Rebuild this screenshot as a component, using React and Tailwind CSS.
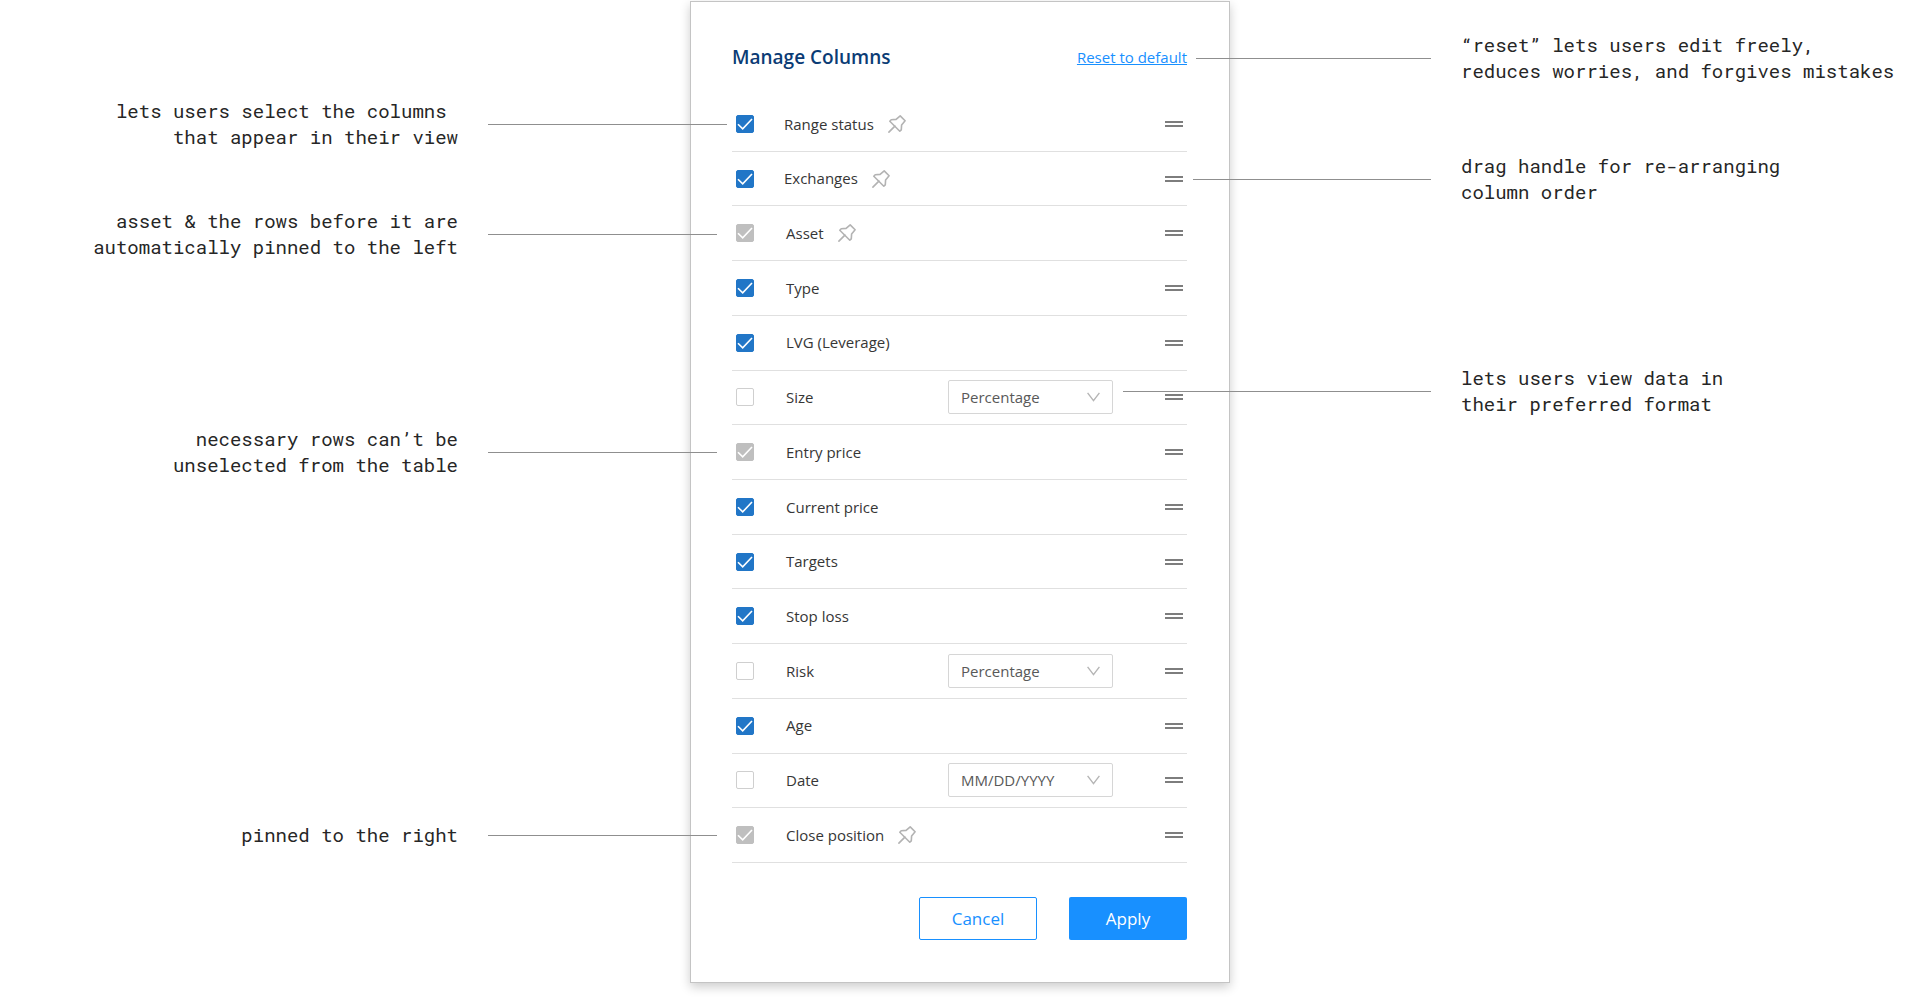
const columns = [
  { id: 'range', label: 'Range status', checked: true, pinned: true, inset: 'pl-[30px]' },
  { id: 'exchanges', label: 'Exchanges', checked: true, pinned: true, inset: 'pl-[30px]' },
  { id: 'asset', label: 'Asset', checked: true, locked: true, pinned: true },
  { id: 'type', label: 'Type', checked: true },
  { id: 'lvg', label: 'LVG (Leverage)', checked: true },
  { id: 'size', label: 'Size', format: ['Percentage', 'Amount'] },
  { id: 'entry', label: 'Entry price', checked: true, locked: true },
  { id: 'current', label: 'Current price', checked: true },
  { id: 'targets', label: 'Targets', checked: true },
  { id: 'stop', label: 'Stop loss', checked: true },
  { id: 'risk', label: 'Risk', format: ['Percentage', 'Amount'] },
  { id: 'age', label: 'Age', checked: true },
  { id: 'date', label: 'Date', format: ['MM/DD/YYYY', 'DD/MM/YYYY'] },
  { id: 'close', label: 'Close position', checked: true, locked: true, pinned: true },
];

const leftNotes = [
  { lines: ['lets users select the columns ', 'that appear in their view'], place: 'mt-[98px]', line: 'w-[239px] -mr-[37px]' },
  { lines: ['asset & the rows before it are', 'automatically pinned to the left'], place: 'mt-[58px]', line: 'w-[229px] -mr-[27px]' },
  { lines: ['necessary rows can’t be', 'unselected from the table'], place: 'mt-[166px]', line: 'w-[229px] -mr-[27px]' },
  { lines: ['pinned to the right'], place: 'mt-[344px]', line: 'w-[229px] -mr-[27px]' },
];

const rightNotes = [
  { lines: ['“reset” lets users edit freely,', 'reduces worries, and forgives mistakes'], place: 'mt-8', line: 'w-[235px] -ml-[34px]' },
  { lines: ['drag handle for re-arranging', 'column order'], place: 'mt-[69px]', line: 'w-[238px] -ml-[37px]' },
  { lines: ['lets users view data in', 'their preferred format'], place: 'mt-40', line: 'w-[308px] -ml-[107px]' },
];

function PinIcon() {
  return (
    <svg className="h-[18px] w-[18px] shrink-0" viewBox="0 0 18 18" fill="none" stroke="#b3b3b3" strokeWidth="1.6" strokeLinejoin="round" strokeLinecap="round" aria-hidden="true">
      <path d="M12.2 0.9 L17.1 5.8 L13.6 9.9 L13.3 14.8 L11.8 16.2 L1.8 6.2 L3.2 4.7 L8.1 4.4 Z" />
      <path d="M6.9 11.1 L0.9 17.1" />
    </svg>
  );
}

function Checkbox({ id, checked, locked }) {
  return (
    <span className="grid h-[18px] w-[18px] shrink-0">
      <input
        id={id}
        type="checkbox"
        defaultChecked={checked}
        disabled={locked}
        className="peer col-start-1 row-start-1 h-[18px] w-[18px] appearance-none rounded-xs border border-[#cfcfcf] bg-white checked:border-[#2176c7] checked:bg-[#2176c7] disabled:border-[#bfbfbf] disabled:bg-[#bfbfbf]"
      />
      <svg className="pointer-events-none invisible col-start-1 row-start-1 h-[18px] w-[18px] peer-checked:visible" viewBox="0 0 18 18" fill="none" stroke="#fff" strokeWidth="1.6" aria-hidden="true">
        <path d="M2 9.2 L6.7 13.9 L16 4" />
      </svg>
    </span>
  );
}

function FormatSelect({ label, options }) {
  return (
    <span className="ml-auto mr-[52px] grid w-[165px] items-center">
      <select
        aria-label={label + ' format'}
        className="col-start-1 row-start-1 h-[34px] w-full appearance-none rounded-xs border border-[#d6d6d6] bg-white pl-3 pr-8 text-[15px] text-[#595959]"
      >
        {options.map((o) => (
          <option key={o}>{o}</option>
        ))}
      </select>
      <svg className="pointer-events-none col-start-1 row-start-1 mr-[13px] h-[10px] w-[13px] justify-self-end" viewBox="0 0 13 10" fill="none" stroke="#b5b5b5" strokeWidth="1.4" aria-hidden="true">
        <path d="M0.6 0.8 L6.5 8.6 L12.4 0.8" />
      </svg>
    </span>
  );
}

function Row({ id, label, checked, locked, pinned, format, inset = 'pl-8' }) {
  return (
    <li className="flex items-center border-b border-[#e0e0e0] pl-1 pr-1">
      <Checkbox id={id} checked={checked} locked={locked} />
      <label htmlFor={id} className={inset + ' text-[15px] text-[#363636]'}>
        {label}
      </label>
      {pinned && (
        <span className="pl-[14px]">
          <PinIcon />
        </span>
      )}
      {format && <FormatSelect label={label} options={format} />}
      <button type="button" aria-label={'Move ' + label} className={(format ? '' : 'ml-auto ') + 'flex h-[6px] w-[18px] cursor-grab flex-col justify-between'}>
        <span className="h-[2px] w-full bg-[#7d7d7d]" />
        <span className="h-[2px] w-full bg-[#7d7d7d]" />
      </button>
    </li>
  );
}

function Note({ lines, place, line, side }) {
  const connector = <span className={'relative z-10 h-px shrink-0 bg-[#8f8f8f] ' + line} />;
  return (
    <div className={'flex items-center gap-[30px] ' + place + (side === 'left' ? ' justify-end text-right' : '')}>
      {side === 'right' && connector}
      <p className="whitespace-pre">
        {lines.map((t) => (
          <span key={t} className="block">
            {t}
          </span>
        ))}
      </p>
      {side === 'left' && connector}
    </div>
  );
}

export default function App() {
  const noteStyle = "font-['Roboto_Mono','DejaVu_Sans_Mono',monospace] text-[19px] leading-[26px] text-[#262626]";
  return (
    <main className="grid min-h-screen grid-cols-[minmax(0,1fr)_540px_minmax(0,1fr)] items-start bg-white">
      <aside className={noteStyle}>
        {leftNotes.map((n) => (
          <Note key={n.lines[0]} {...n} side="left" />
        ))}
      </aside>

      <form
        onSubmit={(e) => e.preventDefault()}
        className="mt-px border border-[#c4c4c4] bg-white pb-[42px] pl-[41px] pr-[42px] pt-[37px] font-['Open_Sans',sans-serif] shadow-[0_4px_10px_rgba(0,0,0,0.2)]"
      >
        <header className="flex h-9 items-center justify-between">
          <h1 className="text-[19px] font-semibold text-[#0b3c75]">Manage Columns</h1>
          <a href="#reset" className="text-[15px] text-[#1890ff] underline">
            Reset to default
          </a>
        </header>
        <ul className="mt-[22px] grid h-[766px] auto-rows-fr">
          {columns.map((c) => (
            <Row key={c.id} {...c} />
          ))}
        </ul>
        <div className="mt-[34px] flex justify-end gap-8">
          <button type="button" className="h-[43px] w-[118px] rounded-xs border border-[#1890ff] bg-white text-[17px] text-[#1890ff]">
            Cancel
          </button>
          <button type="submit" className="h-[43px] w-[118px] rounded-xs bg-[#1890ff] text-[17px] text-white">
            Apply
          </button>
        </div>
      </form>

      <aside className={noteStyle}>
        {rightNotes.map((n) => (
          <Note key={n.lines[0]} {...n} side="right" />
        ))}
      </aside>
    </main>
  );
}
